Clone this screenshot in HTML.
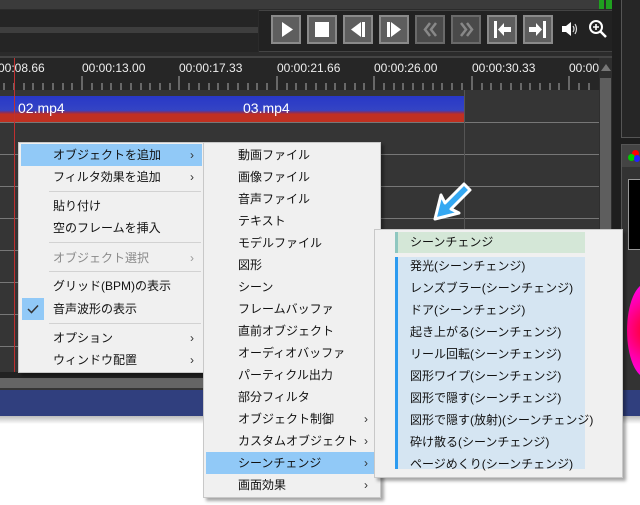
<!DOCTYPE html>
<html><head><meta charset="utf-8"><style>
*{margin:0;padding:0;box-sizing:border-box}
body{width:640px;height:505px;overflow:hidden;background:#fff;position:relative;font-family:"Liberation Sans","Noto Sans CJK JP",sans-serif}
.a{position:absolute}
.btn{position:absolute;top:15px;width:30px;height:29px;background:#5e5e5e;border:2px solid #8a8a8a}
.btn svg{position:absolute;left:0;top:0}
.lbl{position:absolute;top:61px;color:#eee;font-size:12px}
.menu{position:absolute;background:#f0f0f0;border:1px solid #c8c8c8;box-shadow:3px 3px 3px rgba(0,0,0,.35);font-size:12px;color:#111}
.it{position:absolute;left:0;right:0;height:22px;line-height:22px}
.ar{position:absolute;font-size:12px;color:#333}
.sep{position:absolute;height:1px;background:#d2d2d2}
</style></head><body>
<div class="a" style="left:0;top:0;width:640px;height:390px;background:#2b2b2b"></div>
<div class="a" style="left:0;top:0;width:612px;height:9px;background:#3b3b3b"></div>
<div class="a" style="left:599px;top:0;width:13px;height:9px;background:#1fa01f"></div>
<div class="a" style="left:604px;top:0;width:2px;height:9px;background:#2b2b2b"></div>
<div class="a" style="left:0;top:10px;width:258px;height:42px;background:#252525"></div>
<div class="a" style="left:0;top:27px;width:258px;height:6px;background:#3e3e3e"></div>
<div class="a" style="left:259px;top:10px;width:357px;height:42px;background:#222;border:1px solid #444;border-left:none"></div>
<div class="btn" style="left:271px"><svg width="26" height="25"><path d="M9 5 L20 12.5 L9 20Z" fill="#fff"/></svg></div>
<div class="btn" style="left:307px"><svg width="26" height="25"><rect x="6" y="5" width="14" height="15" fill="#fff"/></svg></div>
<div class="btn" style="left:343px"><svg width="26" height="25"><path d="M16 5 L6 12.5 L16 20Z" fill="#fff"/><rect x="17" y="5" width="3" height="15" fill="#fff"/></svg></div>
<div class="btn" style="left:379px"><svg width="26" height="25"><rect x="6" y="5" width="3" height="15" fill="#fff"/><path d="M10 5 L20 12.5 L10 20Z" fill="#fff"/></svg></div>
<div class="btn" style="left:415px;background:#4a4a4a;border-color:#6a6a6a"><svg width="26" height="25"><path d="M13 6 L8 12.5 L13 19 M19 6 L14 12.5 L19 19" stroke="#888" stroke-width="2.5" fill="none"/></svg></div>
<div class="btn" style="left:451px;background:#4a4a4a;border-color:#6a6a6a"><svg width="26" height="25"><path d="M8 6 L13 12.5 L8 19 M14 6 L19 12.5 L14 19" stroke="#888" stroke-width="2.5" fill="none"/></svg></div>
<div class="btn" style="left:487px"><svg width="26" height="25"><rect x="5" y="4" width="3" height="17" fill="#fff"/><path d="M9 12.5 L15 6 V10 H22 V15 H15 V19Z" fill="#fff"/></svg></div>
<div class="btn" style="left:523px"><svg width="26" height="25"><rect x="18" y="4" width="3" height="17" fill="#fff"/><path d="M17 12.5 L11 6 V10 H4 V15 H11 V19Z" fill="#fff"/></svg></div>
<svg class="a" style="left:561px;top:21px" width="18" height="16"><path d="M1 5 H5 L10 1 V15 L5 11 H1Z" fill="#fff"/><path d="M12 5 Q14 8 12 11 M14 3 Q17 8 14 13" stroke="#ddd" stroke-width="1.2" fill="none"/></svg>
<svg class="a" style="left:588px;top:19px" width="20" height="20"><circle cx="8" cy="8" r="6" stroke="#fff" stroke-width="2" fill="none"/><path d="M5 8 H11 M8 5 V11" stroke="#fff" stroke-width="1.6"/><path d="M12 12 L18 18" stroke="#fff" stroke-width="2.5"/></svg>
<div class="a" style="left:0;top:56px;width:612px;height:2px;background:#444"></div>
<div class="a" style="left:0;top:58px;width:599px;height:32px;background:#262626"></div>
<div class="lbl" style="left:-2px">00:08.66</div>
<div class="lbl" style="left:82px">00:00:13.00</div>
<div class="lbl" style="left:179px">00:00:17.33</div>
<div class="lbl" style="left:277px">00:00:21.66</div>
<div class="lbl" style="left:374px">00:00:26.00</div>
<div class="lbl" style="left:472px">00:00:30.33</div>
<div class="lbl" style="left:569px;width:30px;overflow:hidden">00:00</div>
<svg class="a" style="left:0;top:75px" width="599" height="16"><g stroke="#aaa" stroke-width="1">
<path d="M82 1V15M179 1V15M277 1V15M374 1V15M472 1V15M569 1V15"/>
<path d="M4 8V15M14 8V15M24 8V15M33 8V15M43 8V15M53 8V15M63 8V15M72 8V15M92 8V15M102 8V15M111 8V15M121 8V15M131 8V15M141 8V15M150 8V15M160 8V15M170 8V15M189 8V15M199 8V15M209 8V15M218 8V15M228 8V15M238 8V15M248 8V15M257 8V15M267 8V15M287 8V15M296 8V15M306 8V15M316 8V15M326 8V15M335 8V15M345 8V15M355 8V15M364 8V15M384 8V15M394 8V15M403 8V15M413 8V15M423 8V15M433 8V15M442 8V15M452 8V15M462 8V15M482 8V15M491 8V15M501 8V15M511 8V15M521 8V15M530 8V15M540 8V15M550 8V15M559 8V15M579 8V15M589 8V15"/></g></svg>
<div class="a" style="left:0;top:90px;width:599px;height:300px;background:#353535"></div>
<div class="a" style="left:0;top:96px;width:464px;height:26px;background:linear-gradient(#2838c8 0,#3444c4 55%,#7a3070 62%,#c03024 70%,#c03020 100%)"></div>
<div class="a" style="left:18px;top:100px;color:#fff;font-size:14px">02.mp4</div>
<div class="a" style="left:243px;top:100px;color:#fff;font-size:14px">03.mp4</div>
<div class="a" style="left:0;top:122px;width:599px;height:1px;background:#777"></div>
<div class="a" style="left:0;top:154px;width:599px;height:1px;background:#777"></div>
<div class="a" style="left:0;top:186px;width:599px;height:1px;background:#777"></div>
<div class="a" style="left:0;top:218px;width:599px;height:1px;background:#777"></div>
<div class="a" style="left:0;top:250px;width:599px;height:1px;background:#777"></div>
<div class="a" style="left:0;top:282px;width:599px;height:1px;background:#777"></div>
<div class="a" style="left:0;top:314px;width:599px;height:1px;background:#777"></div>
<div class="a" style="left:0;top:346px;width:599px;height:1px;background:#777"></div>
<div class="a" style="left:464px;top:90px;width:1px;height:282px;background:#555"></div>
<div class="a" style="left:14px;top:58px;width:1px;height:314px;background:#c03030"></div>
<div class="a" style="left:599px;top:58px;width:13px;height:314px;background:#2e2e2e"></div>
<svg class="a" style="left:600px;top:62px" width="12" height="10"><path d="M1 9 L6 2 L11 9Z" fill="#777"/></svg>
<div class="a" style="left:600px;top:78px;width:11px;height:294px;background:#5e5e5e"></div>
<div class="a" style="left:0;top:372px;width:612px;height:6px;background:#222"></div>
<div class="a" style="left:0;top:378px;width:612px;height:10px;background:#656565"></div>
<div class="a" style="left:612px;top:0;width:28px;height:390px;background:#1e1e1e"></div>
<div class="a" style="left:621px;top:0;width:19px;height:138px;background:#262626;border-left:1px solid #555;border-bottom:1px solid #555"></div>
<div class="a" style="left:621px;top:144px;width:19px;height:248px;background:#333;border-left:1px solid #555;border-top:1px solid #555"></div>
<div class="a" style="left:622px;top:145px;width:18px;height:22px;background:#444"></div>
<div class="a" style="left:632px;top:150px;width:7px;height:7px;border-radius:50%;background:#f00"></div>
<div class="a" style="left:628px;top:154px;width:7px;height:7px;border-radius:50%;background:#0c0"></div>
<div class="a" style="left:634px;top:155px;width:6px;height:7px;border-radius:50%;background:#22f"></div>
<div class="a" style="left:628px;top:179px;width:12px;height:71px;background:#000;border:1px solid #999;border-right:none"></div>
<div class="a" style="left:627px;top:283px;width:40px;height:95px;border-radius:50%;background:radial-gradient(circle at 70% 50%,#f00,#f0a 60%,#f0f)"></div>
<div class="a" style="left:0;top:390px;width:640px;height:26px;background:#303f7e"></div>
<div class="a" style="left:0;top:416px;width:640px;height:8px;background:linear-gradient(#bbb,#fff)"></div>
<div class="menu" style="left:18px;top:142px;width:186px;height:231px">
<div class="it" style="top:1px;left:2px;right:1px;background:#91c9f7"></div>
<div class="it" style="top:1px;padding-left:34px">オブジェクトを追加</div>
<div class="it" style="top:23px;padding-left:34px">フィルタ効果を追加</div>
<div class="sep" style="top:48px;left:30px;right:2px"></div>
<div class="it" style="top:52px;padding-left:34px">貼り付け</div>
<div class="it" style="top:74px;padding-left:34px">空のフレームを挿入</div>
<div class="sep" style="top:99px;left:30px;right:2px"></div>
<div class="it" style="top:104px;padding-left:34px;color:#8a8a8a">オブジェクト選択</div>
<div class="sep" style="top:128px;left:30px;right:2px"></div>
<div class="it" style="top:132px;padding-left:34px">グリッド(BPM)の表示</div>
<div class="a" style="left:3px;top:155px;width:22px;height:22px;background:#91c9f7"></div>
<svg class="a" style="left:8px;top:161px" width="12" height="10"><path d="M1 5 L4.5 8.5 L11 1.5" stroke="#333" stroke-width="1.5" fill="none"/></svg>
<div class="it" style="top:155px;padding-left:34px">音声波形の表示</div>
<div class="sep" style="top:180px;left:30px;right:2px"></div>
<div class="it" style="top:184px;padding-left:34px">オプション</div>
<div class="it" style="top:206px;padding-left:34px">ウィンドウ配置</div>
<div class="ar" style="left:171px;top:5px">›</div>
<div class="ar" style="left:171px;top:27px">›</div>
<div class="ar" style="left:171px;top:108px;color:#999">›</div>
<div class="ar" style="left:171px;top:188px">›</div>
<div class="ar" style="left:171px;top:210px">›</div>
</div>
<div class="menu" style="left:203px;top:142px;width:178px;height:356px">
<div class="it" style="top:309px;left:2px;right:3px;background:#91c9f7"></div>
<div class="it" style="top:1px;padding-left:34px">動画ファイル</div>
<div class="it" style="top:23px;padding-left:34px">画像ファイル</div>
<div class="it" style="top:45px;padding-left:34px">音声ファイル</div>
<div class="it" style="top:67px;padding-left:34px">テキスト</div>
<div class="it" style="top:89px;padding-left:34px">モデルファイル</div>
<div class="it" style="top:111px;padding-left:34px">図形</div>
<div class="it" style="top:133px;padding-left:34px">シーン</div>
<div class="it" style="top:155px;padding-left:34px">フレームバッファ</div>
<div class="it" style="top:177px;padding-left:34px">直前オブジェクト</div>
<div class="it" style="top:199px;padding-left:34px">オーディオバッファ</div>
<div class="it" style="top:221px;padding-left:34px">パーティクル出力</div>
<div class="it" style="top:243px;padding-left:34px">部分フィルタ</div>
<div class="it" style="top:265px;padding-left:34px">オブジェクト制御</div>
<div class="it" style="top:287px;padding-left:34px">カスタムオブジェクト</div>
<div class="it" style="top:309px;padding-left:34px">シーンチェンジ</div>
<div class="it" style="top:331px;padding-left:34px">画面効果</div>
<div class="ar" style="left:160px;top:269px">›</div>
<div class="ar" style="left:160px;top:291px">›</div>
<div class="ar" style="left:160px;top:313px">›</div>
<div class="ar" style="left:160px;top:335px">›</div>
</div>
<div class="menu" style="left:374px;top:229px;width:249px;height:249px">
<div class="a" style="left:20px;top:2px;width:190px;height:21px;background:#d4e7d7;border-left:3px solid #8fc7c0"></div>
<div class="it" style="top:2px;padding-left:35px;height:21px;line-height:21px">シーンチェンジ</div>
<div class="a" style="left:20px;top:27px;width:190px;height:212px;background:#d5e5f2;border-left:3px solid #2c9bf0"></div>
<div class="it" style="top:25px;padding-left:35px">発光(シーンチェンジ)</div>
<div class="it" style="top:47px;padding-left:35px">レンズブラー(シーンチェンジ)</div>
<div class="it" style="top:69px;padding-left:35px">ドア(シーンチェンジ)</div>
<div class="it" style="top:91px;padding-left:35px">起き上がる(シーンチェンジ)</div>
<div class="it" style="top:113px;padding-left:35px">リール回転(シーンチェンジ)</div>
<div class="it" style="top:135px;padding-left:35px">図形ワイプ(シーンチェンジ)</div>
<div class="it" style="top:157px;padding-left:35px">図形で隠す(シーンチェンジ)</div>
<div class="it" style="top:179px;padding-left:35px">図形で隠す(放射)(シーンチェンジ)</div>
<div class="it" style="top:201px;padding-left:35px">砕け散る(シーンチェンジ)</div>
<div class="it" style="top:223px;padding-left:35px">ページめくり(シーンチェンジ)</div>
</div>
<svg class="a" style="left:425px;top:175px" width="50" height="52"><path d="M39 9 L20 28 L16 20 L10 44 L34 38 L26 34 L45 15Z" fill="#35a8f2" stroke="#fff" stroke-width="3" stroke-linejoin="round"/></svg>
</body></html>
